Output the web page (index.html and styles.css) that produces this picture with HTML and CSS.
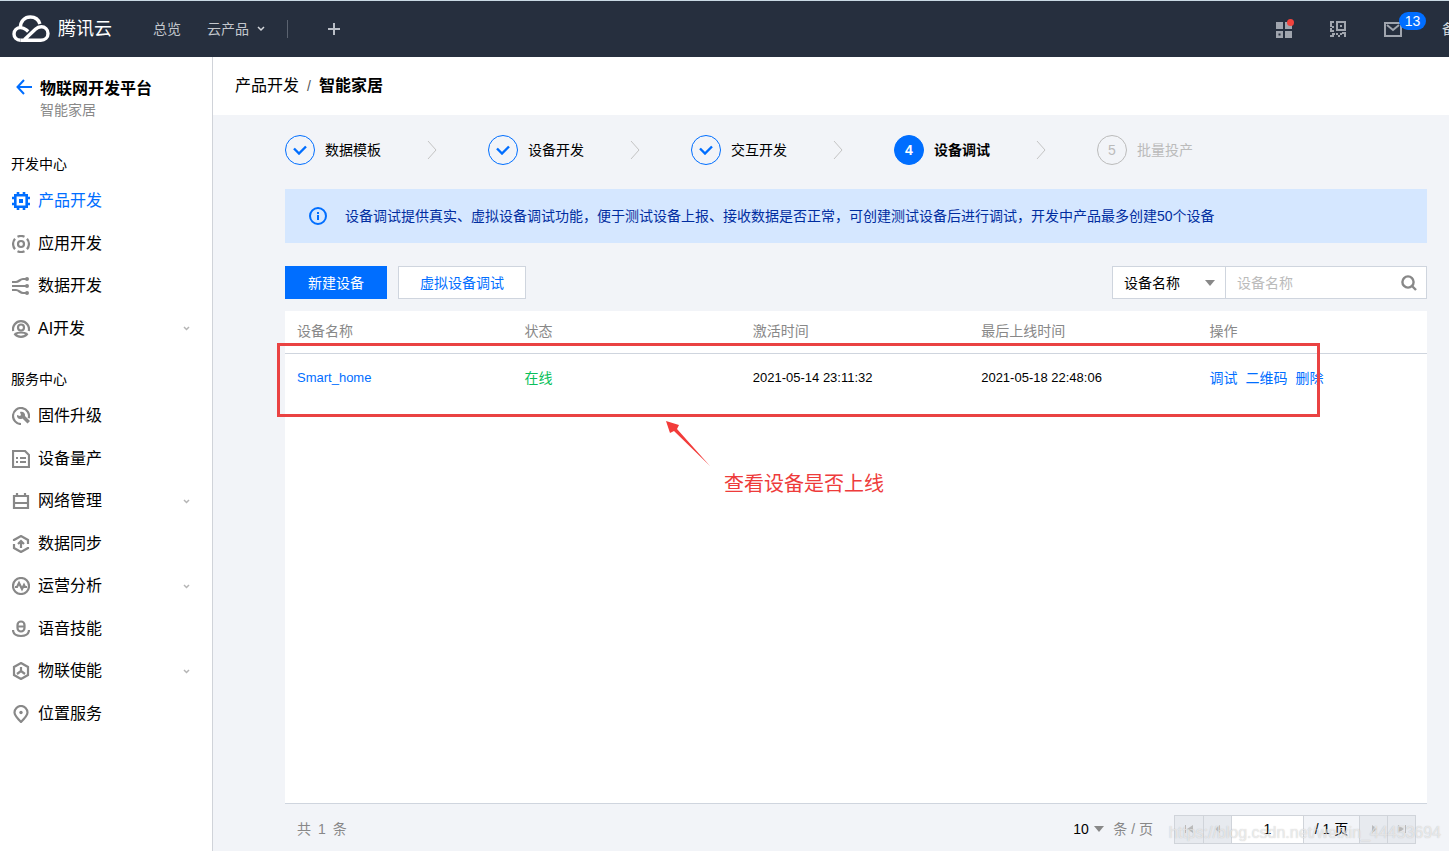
FILE: index.html
```html
<!DOCTYPE html>
<html lang="zh-CN">
<head>
<meta charset="utf-8">
<meta name="viewport" content="width=device-width, initial-scale=1">
<title>物联网开发平台</title>
<link rel="stylesheet" href="styles.css">
</head>
<body>
<header class="topbar">
  <a class="brand" href="#">
    <svg width="38" height="28" viewBox="0 0 38 28" fill="none" stroke="#fff" stroke-width="3.4"><path d="M8.500 25.200C4.500 25.200 2 22.500 2 18.900C2 15.300 4.800 12.600 8.500 12.600C11 12.600 12.600 13.400 14.200 14.800L16.200 16.600"/><path d="M8.400 12.500C8.400 6.300 12.700 2 18.300 2C22.900 2 26.600 4.700 27.900 8.900"/><path d="M8.500 25.200H28.800C33 25.200 36 22.400 36 18.400C36 14.600 33 11.700 29.300 11.700C27 11.700 25.200 12.500 23.400 14.200L12.500 24.400"/></svg>
    <span>腾讯云</span>
  </a>
  <nav class="topnav">
    <a href="#">总览</a>
    <a href="#" class="products">云产品 <svg width="8" height="6" viewBox="0 0 8 6" fill="none" stroke="#d3d7dc" stroke-width="1.500"><path d="M1 1l3 3 3-3"/></svg></a>
    <span class="divider"></span>
    <button class="plain" aria-label="添加"><svg width="12" height="12" viewBox="0 0 12 12" stroke="#b9bec6" stroke-width="2"><path d="M6 0v12M0 6h12"/></svg></button>
  </nav>
  <div class="tools">
    <button class="plain tool" aria-label="应用"><svg width="18" height="20" viewBox="0 0 18 20"><path fill="#a0a5ae" fill-rule="evenodd" d="M0 3h7v7H0zM9 3h7v7H9zM9 12h7v7H9zM0 12h7v7H0zM2.500 14.500v2h2v-2z"/><circle cx="14.500" cy="3.500" r="3.500" fill="#f0433d"/></svg></button>
    <button class="plain tool" aria-label="二维码"><svg width="16" height="16" viewBox="0 0 16 16" fill="#a0a5ae"><path fill-rule="evenodd" d="M6 0h10v10H6zM8 2v6h6V2zM10 4h2v2h-2zM0 0h4v2H2v4H0zM0 7h2v2h2v2H0zM2 5h2v2H2zM0 14h2v-2h3v2H4v2H0zM6 12h2v2H6zM8 14h2v2H8zM10 12h2v2h-2zM12 11h4v5h-2v-3h-2z"/></svg></button>
    <button class="plain tool mail" aria-label="消息"><svg width="18" height="15" viewBox="0 0 18 15" fill="none" stroke="#a0a5ae" stroke-width="2"><path d="M1 1h16v13H1zM3 3l6 5 6-5"/></svg><span class="badge">13</span></button>
    <a class="beian" href="#">备案</a>
  </div>
</header>
<div class="layout">
  <aside class="sidebar">
    <div class="side-head">
      <a href="#" aria-label="返回"><svg width="16" height="16" viewBox="0 0 16 16" fill="none" stroke="#006eff" stroke-width="2"><path d="M8 1L1.500 8 8 15M2 8h14"/></svg></a>
      <div><h1>物联网开发平台</h1><p>智能家居</p></div>
    </div>
    <h2>开发中心</h2>
    <ul>
      <li><a href="#" class="active"><svg class="ico" viewBox="0 0 18 18"><path d="M3.300 3.300h11.400v11.400H3.300zM6 0v3M12 0v3M6 15v3M12 15v3M0 6h3M0 12h3M15 6h3M15 12h3"/><path class="solid" d="M7 7h4v4H7z"/></svg>产品开发</a></li>
      <li><a href="#"><svg class="ico" viewBox="0 0 18 18"><circle cx="9" cy="9" r="3"/><path d="M5.500 1.800a8 8 0 0 1 7 0M5.500 16.200a8 8 0 0 0 7 0M3 3.800a8 8 0 0 0 0 10.400M15 3.800a8 8 0 0 1 0 10.400"/></svg>应用开发</a></li>
      <li><a href="#"><svg class="ico" viewBox="0 0 18 18"><path d="M0 5h4c3 0 4-3 7-3h4M0 9h15M0 13h4c3 0 4 3 7 3h4"/><g class="solid"><circle cx="15" cy="2" r="2"/><circle cx="15" cy="9" r="2"/><circle cx="15" cy="16" r="2"/></g></svg>数据开发</a></li>
      <li><a href="#"><svg class="ico" viewBox="0 0 18 18"><circle cx="9" cy="7.500" r="3"/><path d="M1.200 11a8 8 0 1 1 15.600 0M3 14c3-2 9-2 12 0M2.500 13.500a8 8 0 0 0 13 0"/></svg>AI开发<svg class="caret" viewBox="0 0 7 5"><path d="M1 1l2.500 2.500L6 1"/></svg></a></li>
    </ul>
    <h2>服务中心</h2>
    <ul>
      <li><a href="#"><svg class="ico" viewBox="0 0 18 18"><path d="M9 17a8 8 0 1 1 7.700-5.800"/><path class="solid" d="M5 8l3 1 1-1-1-3c3-1 5.500 1 5 4l5 5-2.500 2.500-5-5C7 13 4.500 11 5 8z"/></svg>固件升级</a></li>
      <li><a href="#"><svg class="ico" viewBox="0 0 18 18"><path d="M1 1h12l4 4v12H1zM4 8h2M8 8h6M4 12h2M8 12h6"/></svg>设备量产</a></li>
      <li><a href="#"><svg class="ico" viewBox="0 0 18 18"><path d="M2 4h14v12H2zM2 11h14M5 1v3M13 1v3"/></svg>网络管理<svg class="caret" viewBox="0 0 7 5"><path d="M1 1l2.500 2.500L6 1"/></svg></a></li>
      <li><a href="#"><svg class="ico" viewBox="0 0 18 18"><path d="M2 6V5l7-4 7 4v4M16 12v1l-7 4-7-4V9M9 13V6M6 9l3-3 3 3"/></svg>数据同步</a></li>
      <li><a href="#"><svg class="ico" viewBox="0 0 18 18"><circle cx="9" cy="9" r="8"/><path d="M3 10h2l2-4 3 6 2-4 1 2h2"/></svg>运营分析<svg class="caret" viewBox="0 0 7 5"><path d="M1 1l2.500 2.500L6 1"/></svg></a></li>
      <li><a href="#"><svg class="ico" viewBox="0 0 18 18"><rect x="5.500" y="1.500" width="7" height="10" rx="3.500"/><path d="M6 6.500h6M1 10c0 4 4 6 8 6s8-2 8-6"/></svg>语音技能</a></li>
      <li><a href="#"><svg class="ico" viewBox="0 0 18 18"><path d="M9 1l7 4v8l-7 4-7-4V5zM9 5v5M9 9l-4 3M9 9l4 3"/></svg>物联使能<svg class="caret" viewBox="0 0 7 5"><path d="M1 1l2.500 2.500L6 1"/></svg></a></li>
      <li><a href="#"><svg class="ico" viewBox="0 0 18 18"><path d="M9 17C5 13 2.500 10.500 2.500 7.500a6.500 6.500 0 0 1 13 0C15.500 10.500 13 13 9 17z"/><circle class="solid" cx="9" cy="7.500" r="1.700"/></svg>位置服务</a></li>
    </ul>
  </aside>
  <main class="main">
    <nav class="crumbs"><a href="#">产品开发</a><span>/</span><strong>智能家居</strong></nav>
    <div class="content">
      <ol class="steps">
        <li><span class="dot"><svg width="14" height="10" viewBox="0 0 14 10"><path d="M1 3.500l5 5 7-7"/></svg></span>数据模板<svg class="next" viewBox="0 0 10 20"><path d="M1 1l8 9-8 9"/></svg></li>
        <li><span class="dot"><svg width="14" height="10" viewBox="0 0 14 10"><path d="M1 3.500l5 5 7-7"/></svg></span>设备开发<svg class="next" viewBox="0 0 10 20"><path d="M1 1l8 9-8 9"/></svg></li>
        <li><span class="dot"><svg width="14" height="10" viewBox="0 0 14 10"><path d="M1 3.500l5 5 7-7"/></svg></span>交互开发<svg class="next" viewBox="0 0 10 20"><path d="M1 1l8 9-8 9"/></svg></li>
        <li class="current"><span class="dot">4</span>设备调试<svg class="next" viewBox="0 0 10 20"><path d="M1 1l8 9-8 9"/></svg></li>
        <li class="todo"><span class="dot">5</span>批量投产</li>
      </ol>
      <div class="notice">
        <svg width="18" height="18" viewBox="0 0 18 18" fill="none" stroke="#006eff" stroke-width="2"><circle cx="9" cy="9" r="8"/><path d="M9 8v5M9 5v2"/></svg>
        <p>设备调试提供真实、虚拟设备调试功能，便于测试设备上报、接收数据是否正常，可创建测试设备后进行调试，开发中产品最多创建50个设备</p>
      </div>
      <div class="actions">
        <button class="btn primary">新建设备</button>
        <button class="btn">虚拟设备调试</button>
        <form class="search">
          <span class="field-type"><select aria-label="搜索字段"><option>设备名称</option></select><svg class="tri" viewBox="0 0 10 6"><path d="M0 0h10L5 6z"/></svg></span>
          <span class="field-text"><input type="text" placeholder="设备名称" aria-label="设备名称"><button type="button" class="plain" aria-label="搜索"><svg width="16" height="16" viewBox="0 0 16 16" fill="none" stroke="#888" stroke-width="2.400"><circle cx="7" cy="7" r="5.600"/><path d="M11 11l4 4"/></svg></button></span>
        </form>
      </div>
      <section class="card">
        <table>
          <thead><tr><th>设备名称</th><th>状态</th><th>激活时间</th><th>最后上线时间</th><th>操作</th></tr></thead>
          <tbody><tr><td><a href="#">Smart_home</a></td><td class="online">在线</td><td>2021-05-14 23:11:32</td><td>2021-05-18 22:48:06</td><td><div class="ops"><a href="#">调试</a><a href="#">二维码</a><a href="#">删除</a></div></td></tr></tbody>
        </table>
        <div class="mark-box"></div>
        <svg class="mark-arrow" width="44" height="45" viewBox="0 0 44 45"><path fill="#f23c3a" d="M0 0l13 4-2 4 33 37L8 10l-4 2z"/></svg>
        <p class="mark-text">查看设备是否上线</p>
      </section>
      <footer class="pager">
        <span class="total"><span>共</span><span>1</span><span>条</span></span>
        <label class="size"><select aria-label="每页条数"><option>10</option></select><svg class="tri" viewBox="0 0 10 6"><path d="M0 0h10L5 6z"/></svg><span>条 / 页</span></label>
        <div class="pages">
          <button aria-label="首页"><svg viewBox="0 0 8 8"><path d="M0 0h1v8H0zM8 0v8L2 4z"/></svg></button>
          <button aria-label="上一页"><svg viewBox="0 0 8 8"><path d="M6 0v8L1 4z"/></svg></button>
          <input type="text" value="1" aria-label="页码">
          <span>/ 1 页</span>
          <button aria-label="下一页"><svg viewBox="0 0 8 8"><path d="M2 0v8l5-4z"/></svg></button>
          <button aria-label="末页"><svg viewBox="0 0 8 8"><path d="M7 0h1v8H7zM0 0v8l6-4z"/></svg></button>
        </div>
        <span class="watermark">https://blog.csdn.net/weixin_44453694</span>
      </footer>
    </div>
  </main>
</div>
</body>
</html>
```
FILE: styles.css
```css
* { box-sizing: border-box; }
body {
  margin: 0;
  min-height: 100vh;
  display: flex;
  flex-direction: column;
  font: 14px/20px "Liberation Sans", "Noto Sans CJK SC", sans-serif;
  color: #000;
  background: #f2f4f8;
}
a { color: inherit; text-decoration: none; }
h1, h2, p, ul, ol { margin: 0; padding: 0; list-style: none; }
button, input, select { font: inherit; color: inherit; margin: 0; border-radius: 0; }
.plain { border: 0; padding: 0; background: none; display: flex; }
svg { flex: none; }

.topbar {
  height: 57px;
  flex: none;
  display: flex;
  align-items: center;
  padding-left: 12px;
  background: #262f3e;
  border-top: 1px solid #c9d9e3;
  color: #c3c7cd;
  overflow: hidden;
}
.brand { display: flex; align-items: center; gap: 8px; width: 141px; font-size: 18px; line-height: 28px; color: #fff; }
.topnav { display: flex; align-items: center; gap: 26px; }
.products { display: flex; align-items: center; gap: 8px; }
.divider { width: 1px; height: 18px; background: #5b6370; margin-left: -4px; }
.topnav .plain { margin-left: 14px; }
.tools { display: flex; align-items: center; margin-left: auto; height: 20px; }
.tool { width: 54px; align-items: center; }
.mail { position: relative; width: 58px; }
.badge {
  position: absolute;
  left: 15px;
  top: -10px;
  width: 27px;
  height: 18px;
  border-radius: 9px;
  background: #006eff;
  color: #fff;
  line-height: 18px;
}
.beian { width: 7px; white-space: nowrap; color: #d3d7dc; }

.layout { flex: 1; display: flex; }
.sidebar { width: 213px; flex: none; background: #fff; border-right: 1px solid #d0d3d9; padding: 20px 0 24px; }
.side-head { display: flex; gap: 8px; padding: 0 16px; margin-bottom: 28px; }
.side-head a { padding-top: 2px; height: 20px; }
.side-head h1 { font-size: 16px; line-height: 23px; }
.side-head p { color: #888; }
.sidebar h2 { font-size: 14px; font-weight: 400; line-height: 32px; padding-left: 11px; }
.sidebar ul + h2 { margin-top: 13px; }
.sidebar li { height: 42px; }
.sidebar li:nth-child(even) { height: 43px; }
.sidebar li a { display: flex; align-items: center; gap: 8px; height: 100%; padding: 0 22px 0 12px; font-size: 16px; }
.sidebar .active { color: #006eff; }
.ico { width: 18px; height: 18px; fill: none; stroke: #888; stroke-width: 2.2; }
.ico .solid { fill: #888; stroke: none; }
.active .ico { stroke: #006eff; stroke-width: 2.6; }
.active .ico .solid { fill: #006eff; }
.caret { width: 7px; height: 5px; margin-left: auto; fill: none; stroke: #b5b5b5; stroke-width: 1.5; }

.main { flex: 1; min-width: 0; display: flex; flex-direction: column; }
.crumbs { height: 58px; display: flex; align-items: center; padding-left: 22px; gap: 8px; background: #fff; font-size: 16px; }
.crumbs span { font-size: 14px; color: #555; }
.content { flex: 1; display: flex; flex-direction: column; padding: 20px 22px 0 72px; }
.steps { display: flex; height: 30px; }
.steps li { display: flex; align-items: center; white-space: nowrap; width: 203px; }
.dot {
  width: 30px;
  height: 30px;
  margin-right: 10px;
  border: 1px solid #006eff;
  border-radius: 50%;
  display: flex;
  align-items: center;
  justify-content: center;
}
.dot path { fill: none; stroke: #006eff; stroke-width: 2.4; }
.next { width: 10px; height: 20px; margin-left: 46px; fill: none; stroke: #c4c4c4; }
.current { font-weight: 700; }
.current .dot { background: #006eff; color: #fff; }
.todo { color: #bbb; }
.todo .dot { border-color: #bbb; }

.notice {
  display: flex;
  align-items: center;
  gap: 18px;
  min-height: 54px;
  margin-top: 24px;
  padding: 0 24px;
  background: #d5e7ff;
  color: #002da0;
}
.actions { display: flex; gap: 11px; margin: 23px 0 12px; height: 33px; }
.btn { border: 1px solid #cfd5de; background: #fff; color: #006eff; padding: 0 21px; }
.primary { background: #006eff; border-color: #006eff; color: #fff; padding: 0 22px; }
.search { display: flex; margin-left: auto; }
.field-type, .field-text { position: relative; display: flex; align-items: center; background: #fff; border: 1px solid #cfd5de; }
.field-type { width: 114px; }
.field-text { width: 202px; margin-left: -1px; padding-right: 9px; }
select { appearance: none; border: 0; background: none; }
.field-type select { width: 100%; height: 100%; padding: 0 11px; }
.tri { width: 10px; height: 6px; fill: #888; }
.field-type .tri { position: absolute; right: 10px; pointer-events: none; }
.field-text input { flex: 1; min-width: 0; border: 0; padding: 0 11px; background: none; }
.field-text input::placeholder { color: #bbb; }

.card { position: relative; flex: 1; background: #fff; border-bottom: 1px solid #cfd5de; }
table { width: 100%; table-layout: fixed; border-collapse: collapse; }
th, td { text-align: left; padding: 0 11px; }
th:first-child, td:first-child { padding-left: 12px; }
th { height: 42px; padding-bottom: 2px; font-weight: 400; color: #888; border-bottom: 1px solid #cfd5de; }
td { height: 50px; font-size: 13px; white-space: nowrap; }
td a { color: #006eff; }
.online, .ops { font-size: 14px; }
.online { color: #0abf5b; }
.ops { display: flex; gap: 8px; }
.mark-box { position: absolute; left: -8px; right: 107px; top: 32px; height: 74px; border: 3px solid #ea4242; pointer-events: none; }
.mark-arrow { position: absolute; left: 381px; top: 110px; }
.mark-text { position: absolute; left: 439px; top: 158px; font-size: 20px; line-height: 30px; color: #ee3b3b; }

.pager { position: relative; display: flex; align-items: center; height: 47px; padding: 3px 11px 0 12px; color: #888; }
.total { display: flex; gap: 7px; }
.size { display: flex; align-items: center; margin-left: auto; }
.size select { color: #000; padding: 0; width: 21px; }
.size .tri { margin-right: 9px; }
.pages { display: flex; height: 29px; margin-left: 21px; border: 1px solid #d0d4da; color: #000; }
.pages > * { border: 0; border-left: 1px solid #d0d4da; }
.pages > :first-child { border-left: 0; }
.pages button { width: 28px; padding: 0; background: #e7eaef; display: flex; align-items: center; justify-content: center; }
.pages button svg { width: 8px; height: 8px; fill: #bbb; }
.pages input { width: 72px; text-align: center; background: #fff; padding: 0; }
.pages span { width: 56px; text-align: center; line-height: 27px; }
.watermark { position: absolute; right: -14px; bottom: 8px; font-size: 16px; color: rgba(255, 255, 255, 0.6); text-shadow: 0 0 1px rgba(120, 120, 120, 0.45); pointer-events: none; }
```
